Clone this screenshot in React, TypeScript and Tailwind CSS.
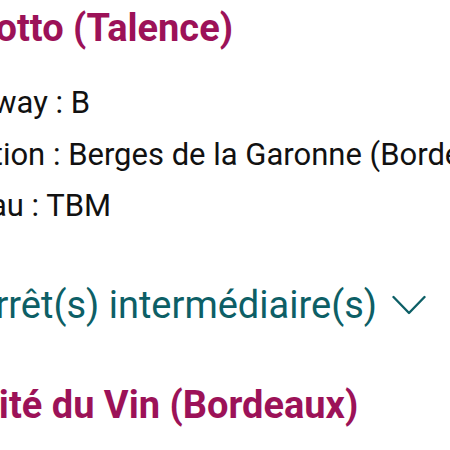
import React from 'react';

const ChevronDown: React.FC = () => (
    <svg width="34" height="20" viewBox="0 0 34 20" fill="none" className="ml-[15px] shrink-0">
        <path d="M1.5 2 L17 18 L32.5 2" stroke="#0d5f66" strokeWidth="2.4" strokeLinecap="round" strokeLinejoin="round" />
    </svg>
);

export default function App() {
    return (
        <div className="w-[450px] h-[450px] overflow-hidden bg-white font-['Roboto','Liberation_Sans',sans-serif]">
            <div className="pt-[5px] whitespace-nowrap">
                {/* Stop name */}
                <h2 className="-ml-[78px] text-[38px] leading-[46px] font-bold text-[#9c1258]">Peixotto (Talence)</h2>

                {/* Line details */}
                <div className="-ml-[78px] mt-[26px] text-[31px] leading-[51.5px] text-[#111]">
                    <p>Tramway : B</p>
                    <p>Direction : Berges de la Garonne (Bordeaux)</p>
                    <p>Réseau : TBM</p>
                </div>

                {/* Intermediate stops toggle */}
                <button className="-ml-[56px] mt-[50px] flex items-center text-[38px] leading-[46px] text-[#0d5f66]">
                    <span>6 arrêt(s) intermédiaire(s)</span>
                    <ChevronDown />
                </button>

                {/* Destination */}
                <h2 className="-ml-[26px] mt-[54px] text-[38px] leading-[46px] font-bold text-[#9c1258]">Cité du Vin (Bordeaux)</h2>
            </div>
        </div>
    );
}
